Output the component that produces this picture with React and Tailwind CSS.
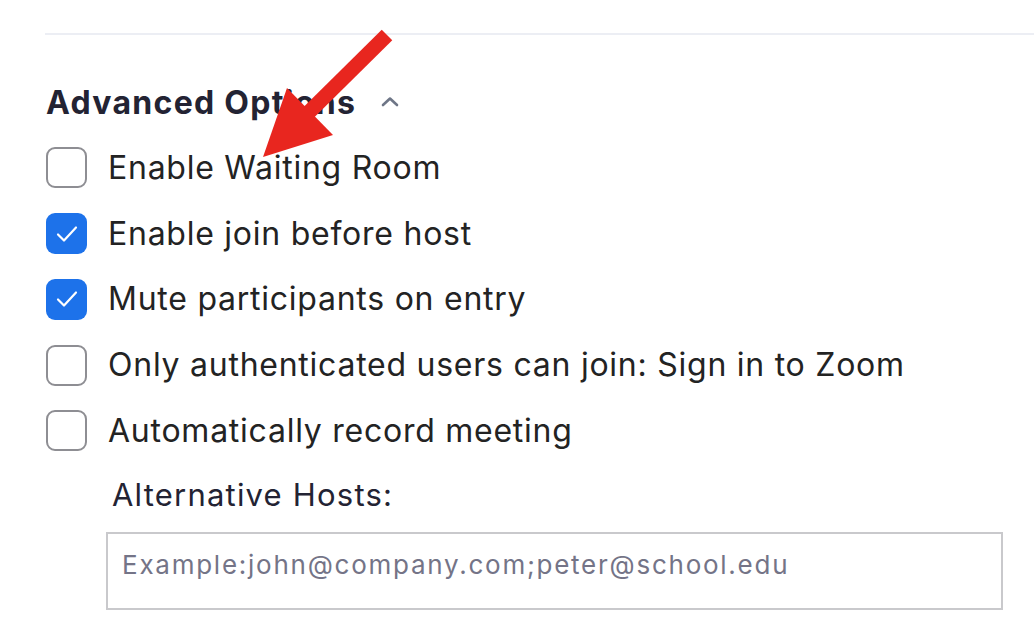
import React from "react";

const font = { fontFamily: "Inter, 'Noto Sans', 'Liberation Sans', sans-serif" };

function Check({ checked }) {
  if (checked) {
    return (
      <div className="w-[41px] h-[41px] rounded-[9px] bg-[#1d72ea] flex items-center justify-center shrink-0">
        <svg width="22" height="18" viewBox="0 0 22 18" fill="none">
          <path d="M2 9.5 L8 15.5 L20 2.5" stroke="white" strokeWidth="2.2" strokeLinecap="round" strokeLinejoin="round" />
        </svg>
      </div>
    );
  }
  return <div className="w-[41px] h-[41px] rounded-[9px] border-2 border-[#8e8e93] bg-white shrink-0" />;
}

const rows = [
  ["Enable Waiting Room", false],
  ["Enable join before host", true],
  ["Mute participants on entry", true],
  ["Only authenticated users can join: Sign in to Zoom", false],
  ["Automatically record meeting", false],
];

export default function App() {
  return (
    <div className="relative w-[1034px] h-[632px] bg-white overflow-hidden" style={font}>
      <div className="pt-[33px]">
        <div className="ml-[45px] h-[2px] bg-[#eceef4]" />
        <div className="pl-[46px]">
          <div className="mt-[48px] h-[40px] flex items-center">
            <span className="text-[32px] font-bold text-[#232333] tracking-[1.3px]">Advanced Options</span>
            <svg className="ml-[25px] mt-[-4px]" width="18" height="11" viewBox="0 0 18 11" fill="none">
              <path d="M2 9 L9 2.5 L16 9" stroke="#6e7687" strokeWidth="2.6" strokeLinecap="round" strokeLinejoin="round" />
            </svg>
          </div>
          <div className="mt-[12px] flex flex-col">
            {rows.map(([label, checked]) => (
              <div key={label} className="h-[65.75px] flex items-center">
                <Check checked={checked} />
                <span className="ml-[21px] text-[32px] text-[#232323] tracking-[0.75px]">{label}</span>
              </div>
            ))}
          </div>
          <div className="mt-[13px] pl-[66px] h-[36px] flex items-center text-[31px] text-[#232333] tracking-[1.2px]">
            Alternative Hosts:
          </div>
          <div className="mt-[19px] ml-[60px] w-[897px] h-[78px] border-2 border-[#c9c9cc] pl-[14px] pt-[11px]">
            <span className="text-[26px] text-[#747487] tracking-[1.75px]">Example:john@company.com;peter@school.edu</span>
          </div>
        </div>
      </div>
      <svg className="absolute left-0 top-0 pointer-events-none" width="1034" height="632" viewBox="0 0 1034 632">
        <line x1="387" y1="35" x2="300" y2="121" stroke="#e8261f" strokeWidth="15" />
        <polygon points="263,157 287,88 333,135" fill="#e8261f" />
      </svg>
    </div>
  );
}
